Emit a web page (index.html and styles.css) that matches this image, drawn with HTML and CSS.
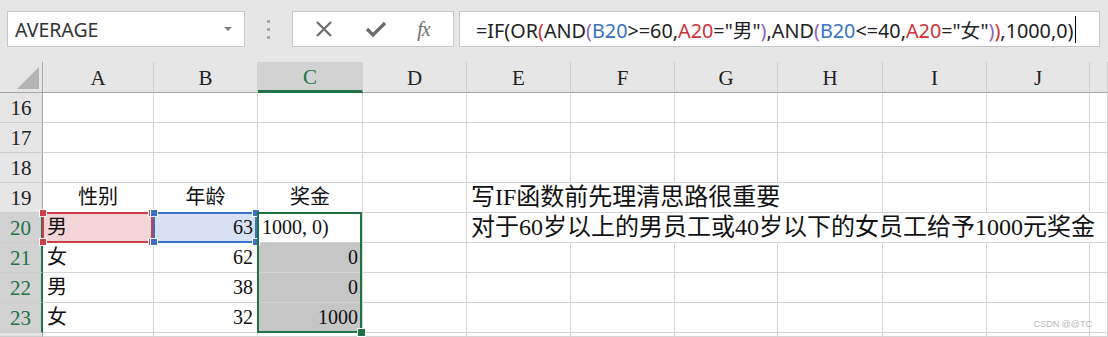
FILE: index.html
```
<!DOCTYPE html>
<html lang="zh-CN">

<head>
    <meta charset="UTF-8">
    <title>Excel IF</title>
    <link rel="stylesheet" href="styles.css">
</head>

<body>
    <div class="toolbar">
        <div class="namebox">
            <span>AVERAGE</span>
            <span class="caret"></span>
        </div>
        <div class="grip"><i></i><i></i><i></i></div>
        <div class="btns">
            <svg width="20" height="20" viewBox="0 0 20 20"><path d="M3 3 L17 17 M17 3 L3 17" stroke="#6b6b6b" stroke-width="2.2" fill="none"/></svg>
            <svg width="22" height="20" viewBox="0 0 22 20"><path d="M2 10 L8 16 L20 4" stroke="#6b6b6b" stroke-width="3.2" fill="none"/></svg>
            <span class="fx">fx</span>
        </div>
        <div class="formula">
            <span class="ftext">=IF(OR<span class="p-red">(</span>AND<span class="p-pur">(</span><span class="r-blue">B20</span>&gt;=60,<span class="r-red">A20</span>="男"<span class="p-pur">)</span>,AND<span class="p-pur">(</span><span class="r-blue">B20</span>&lt;=40,<span class="r-red">A20</span>="女"<span class="p-pur">)</span><span class="p-red">)</span>,1000,0)</span><span class="cursor"></span>
        </div>
    </div>

    <div class="sheet">
        <!-- column headers -->
        <div class="corner"><span class="tri"></span></div>
        <div class="ch">A</div>
        <div class="ch">B</div>
        <div class="ch on">C</div>
        <div class="ch">D</div>
        <div class="ch">E</div>
        <div class="ch">F</div>
        <div class="ch">G</div>
        <div class="ch">H</div>
        <div class="ch">I</div>
        <div class="ch">J</div>
        <div class="ch"></div>

        <!-- 16 -->
        <div class="rh">16</div>
        <div class="c"></div><div class="c"></div><div class="c"></div><div class="c"></div><div class="c"></div>
        <div class="c"></div><div class="c"></div><div class="c"></div><div class="c"></div><div class="c"></div><div class="c"></div>

        <!-- 17 -->
        <div class="rh">17</div>
        <div class="c"></div><div class="c"></div><div class="c"></div><div class="c"></div><div class="c"></div>
        <div class="c"></div><div class="c"></div><div class="c"></div><div class="c"></div><div class="c"></div><div class="c"></div>

        <!-- 18 -->
        <div class="rh">18</div>
        <div class="c"></div><div class="c"></div><div class="c"></div><div class="c"></div><div class="c"></div>
        <div class="c"></div><div class="c"></div><div class="c"></div><div class="c"></div><div class="c"></div><div class="c"></div>

        <!-- 19 -->
        <div class="rh">19</div>
        <div class="c mid">性别</div>
        <div class="c mid">年龄</div>
        <div class="c mid">奖金</div>
        <div class="c"></div>
        <div class="c note span4">写IF函数前先理清思路很重要</div>
        <div class="c"></div><div class="c"></div><div class="c"></div>

        <!-- 20 -->
        <div class="rh sel-row">20</div>
        <div class="c red-fill">男
            <div class="box box-red"><i class="k tl"></i><i class="k tr"></i><i class="k bl"></i><i class="k br"></i></div>
        </div>
        <div class="c blue-fill num">63
            <div class="box box-blue"><i class="k tl"></i><i class="k tr"></i><i class="k bl"></i><i class="k br"></i></div>
        </div>
        <div class="c">1000, 0)
            <div class="box box-green"><i class="fill-handle"></i></div>
        </div>
        <div class="c"></div>
        <div class="c note span-end">对于60岁以上的男员工或40岁以下的女员工给予1000元奖金</div>

        <!-- 21 -->
        <div class="rh sel-row">21</div>
        <div class="c">女</div>
        <div class="c num">62</div>
        <div class="c num gray">0</div>
        <div class="c"></div><div class="c"></div><div class="c"></div><div class="c"></div>
        <div class="c"></div><div class="c"></div><div class="c"></div><div class="c"></div>

        <!-- 22 -->
        <div class="rh sel-row">22</div>
        <div class="c">男</div>
        <div class="c num">38</div>
        <div class="c num gray">0</div>
        <div class="c"></div><div class="c"></div><div class="c"></div><div class="c"></div>
        <div class="c"></div><div class="c"></div><div class="c"></div><div class="c"></div>

        <!-- 23 -->
        <div class="rh sel-row">23</div>
        <div class="c">女</div>
        <div class="c num">32</div>
        <div class="c num gray">1000</div>
        <div class="c"></div><div class="c"></div><div class="c"></div><div class="c"></div>
        <div class="c"></div><div class="c"></div><div class="c"></div><div class="c"></div>

        <!-- 24, only its top edge shows -->
        <div class="rh"></div>
        <div class="c"></div><div class="c"></div><div class="c"></div><div class="c"></div><div class="c"></div>
        <div class="c"></div><div class="c"></div><div class="c"></div><div class="c"></div><div class="c"></div><div class="c"></div>

        <div class="mark">CSDN @@TC</div>
    </div>
</body>

</html>
```

FILE: styles.css
```
body {
    margin: 0;
    width: 1108px;
    height: 337px;
    overflow: hidden;
    background-color: #e6e6e6;
    font-family: "Liberation Serif", "Noto Sans CJK SC", serif;
}

/* barra de fórmulas */
.toolbar {
    height: 62px;
    display: flex;
    align-items: flex-start;
    padding: 11px 8px 0 7px;
    box-sizing: border-box;
}

.namebox {
    width: 238px;
    height: 36px;
    box-sizing: border-box;
    border: 1px solid #c6c6c6;
    background-color: white;
    display: flex;
    align-items: center;
    justify-content: space-between;
    padding: 0 12px 0 7px;
    font-family: "Noto Sans", sans-serif;
    font-size: 19.5px;
    color: #333;
}

.caret {
    width: 0;
    height: 0;
    border-left: 4px solid transparent;
    border-right: 4px solid transparent;
    border-top: 4px solid #808080;
}

.grip {
    width: 47px;
    height: 36px;
    display: flex;
    flex-direction: column;
    align-items: center;
    justify-content: center;
    gap: 5px;
}

.grip i {
    width: 3px;
    height: 3px;
    background-color: #a8a8a8;
}

.btns {
    width: 162px;
    height: 36px;
    box-sizing: border-box;
    border: 1px solid #c6c6c6;
    background-color: white;
    display: flex;
    align-items: center;
    justify-content: space-around;
    padding: 0 8px 0 6px;
}

.fx {
    font-family: "Liberation Serif", serif;
    font-style: italic;
    font-size: 20px;
    color: #707070;
    letter-spacing: -1px;
}

.formula {
    flex: 1;
    margin-left: 5px;
    height: 36px;
    box-sizing: border-box;
    border: 1px solid #c6c6c6;
    background-color: white;
    display: flex;
    align-items: center;
    padding-left: 16px;
    font-family: "Noto Sans", "Noto Sans CJK SC", sans-serif;
    font-size: 19.8px;
    color: #222;
}

.ftext {
    white-space: nowrap;
}

.p-red, .r-red { color: #cc3338; }
.p-pur { color: #9360bf; }
.r-blue { color: #3a6fc6; }

.cursor {
    width: 1px;
    height: 27px;
    margin-left: 2px;
    background-color: black;
}

/* planilha */
.sheet {
    position: relative;
    display: grid;
    grid-template-columns: 43px 111px 104px 105px 104px 104px 104px 103px 105px 104px 103px 1fr;
    grid-template-rows: 31px repeat(8, 30px) 4px;
}

.corner, .ch, .rh, .c {
    box-sizing: border-box;
}

.corner {
    background-color: #e6e6e6;
    border-right: 1px solid #a6a6a6;
    border-bottom: 1px solid #a6a6a6;
    position: relative;
}

.tri {
    position: absolute;
    right: 3px;
    bottom: 3px;
    width: 0;
    height: 0;
    border-left: 22px solid transparent;
    border-bottom: 22px solid #b4b4b4;
}

.ch {
    background-color: #e6e6e6;
    border-right: 1px solid #cdcdcd;
    border-bottom: 1px solid #a6a6a6;
    display: flex;
    align-items: center;
    justify-content: center;
    font-size: 21px;
    color: #222;
    padding-top: 2px;
}

.ch.on {
    background-color: #d2d2d2;
    color: #217346;
    border-bottom: 3px solid #217346;
}

.rh {
    background-color: #e6e6e6;
    border-right: 1px solid #a6a6a6;
    border-bottom: 1px solid #cdcdcd;
    display: flex;
    align-items: center;
    justify-content: center;
    font-size: 21px;
    color: #222;
    padding-top: 1px;
}

.rh.sel-row {
    background-color: #d2d2d2;
    color: #217346;
    border-right: 2px solid #217346;
}

.c {
    position: relative;
    background-color: white;
    border-right: 1px solid #d4d4d4;
    border-bottom: 1px solid #d4d4d4;
    display: flex;
    align-items: flex-end;
    padding: 0 4px 3px 4px;
    font-size: 20px;
    line-height: 24px;
    color: #111;
    white-space: nowrap;
}

.c.mid { justify-content: center; }
.c.num { justify-content: flex-end; }

.red-fill { background-color: #f3d5d7; }
.blue-fill { background-color: #d7e1f2; }
.gray { background-color: #c6c6c6; }

.note {
    font-size: 24px;
    line-height: 28px;
    padding-bottom: 1px;
}

.span4 { grid-column: span 4; }
.span-end { grid-column: 6 / -1; }

/* caixas de referência, por cima das células */
.box {
    position: absolute;
    left: -1px;
    top: -1px;
    width: calc(100% + 1px);
    height: 31px;
    box-sizing: border-box;
    z-index: 2;
}

.box-red { border: 2px solid #c8414a; }
.box-blue { border: 2px solid #3b70c8; }

.box-green {
    height: 121px;
    border: 2px solid #217346;
}

.k {
    position: absolute;
    width: 6px;
    height: 6px;
    border: 1px solid white;
}

.box-red .k { background-color: #c8414a; }
.box-blue .k { background-color: #3b70c8; }

.k.tl { left: -5px; top: -5px; }
.k.tr { right: -5px; top: -5px; }
.k.bl { left: -5px; bottom: -5px; }
.k.br { right: -5px; bottom: -5px; }

.fill-handle {
    position: absolute;
    right: -6px;
    bottom: -6px;
    width: 7px;
    height: 7px;
    background-color: #217346;
    border: 1px solid white;
}

.mark {
    position: absolute;
    right: 16px;
    bottom: 8px;
    font-family: "Liberation Sans", sans-serif;
    font-size: 9px;
    color: #b8b8b8;
    z-index: 3;
}
```
